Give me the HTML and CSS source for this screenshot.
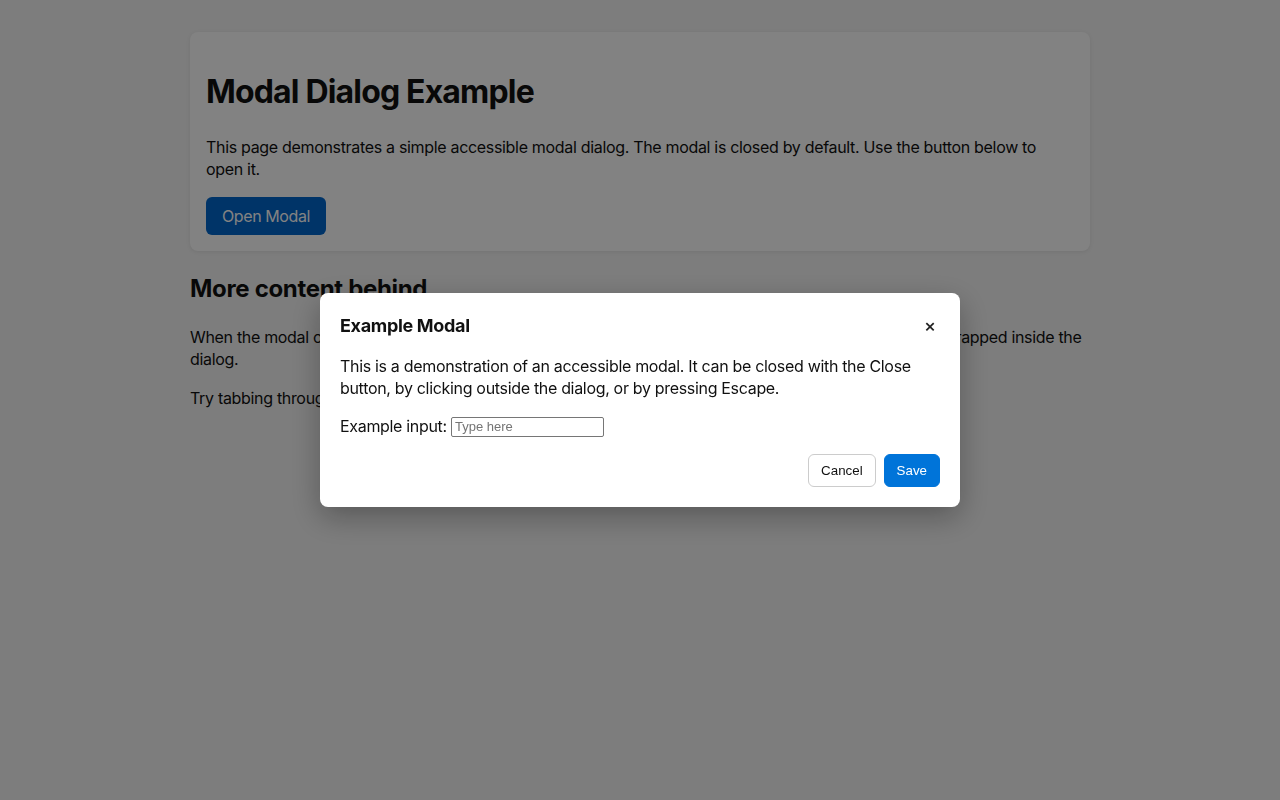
FILE: index.html
```html
<!DOCTYPE html>
<html lang="en">
<head>
  <meta charset="UTF-8">
  <meta name="viewport" content="width=device-width, initial-scale=1.0">
  <title>Modal Dialog Example</title>
  <link rel="stylesheet" href="styles.css">
</head>
<body>
  <div class="container">
    <div class="card">
      <h1>Modal Dialog Example</h1>
      <p>This page demonstrates a simple accessible modal dialog. The modal is closed by default. Use the button below to open it.</p>
      <button class="btn-open" id="open-modal">Open Modal</button>
    </div>
    <h2 class="section-title">More content behind</h2>
    <p>When the modal opens, the page content behind it is dimmed and cannot be reached. Keyboard focus is trapped inside the dialog.</p>
    <p>Try tabbing through the page with the modal open and closed.</p>
  </div>

  <div class="overlay" id="overlay">
    <div class="modal" role="dialog" aria-modal="true" aria-labelledby="modal-title">
      <div class="modal-header">
        <h2 id="modal-title">Example Modal</h2>
        <button class="close" aria-label="Close">&times;</button>
      </div>
      <p>This is a demonstration of an accessible modal. It can be closed with the Close button, by clicking outside the dialog, or by pressing Escape.</p>
      <label>Example input: <input type="text" placeholder="Type here"></label>
      <div class="modal-footer">
        <button class="btn-cancel">Cancel</button>
        <button class="btn-save">Save</button>
      </div>
    </div>
  </div>
</body>
</html>
```

FILE: styles.css
```css
body {
  margin: 0;
  font-family: Inter, "Noto Sans", sans-serif;
  line-height: 1.4;
  letter-spacing: -0.02em;
  color: #111;
  background-color: #f5f5f5;
}

.container {
  max-width: 900px;
  margin: 32px auto;
}

.card {
  background-color: #fff;
  border-radius: 8px;
  padding: 17px 16px 16px;
  box-shadow: 0 1px 4px rgba(0, 0, 0, 0.08);
}

h1 {
  font-size: 32px;
  letter-spacing: -0.026em;
  margin: 21px 0;
}

h2 {
  font-size: 24px;
  margin: 20px 0;
}

.section-title {
  margin-top: 21.5px;
}

p {
  margin: 16px 0;
}

.btn-open {
  font-family: inherit;
  font-size: 16px;
  line-height: 1.4;
  letter-spacing: -0.025em;
  padding: 8px 16px;
  border: none;
  border-radius: 6px;
  background-color: #0066cc;
  color: #fff;
}

.overlay {
  position: fixed;
  inset: 0;
  background-color: rgba(0, 0, 0, 0.49);
  display: flex;
  align-items: center;
  justify-content: center;
}

.modal {
  width: 640px;
  box-sizing: border-box;
  padding: 20px;
  background-color: #fff;
  border-radius: 8px;
  box-shadow: 0 10px 30px rgba(0, 0, 0, 0.3);
}

.modal-header {
  display: flex;
  align-items: center;
  justify-content: space-between;
}

.modal-header h2 {
  font-size: 18px;
  margin: 0;
}

.close {
  background: none;
  border: none;
  font-family: inherit;
  font-size: 18px;
  line-height: 1;
  padding: 2px 4px;
  color: #222;
  font-weight: 500;
}

.modal p {
  margin: 16px 0;
}

.modal input {
  width: 153px;
  height: 20px;
  box-sizing: border-box;
  border: 1px solid #767676;
  border-radius: 2px;
  padding: 1px 3px;
  font-family: "Liberation Sans", Arial, sans-serif;
  font-size: 13px;
  letter-spacing: 0;
  vertical-align: 1px;
}

.modal input::placeholder {
  color: #757575;
}

.modal-footer {
  display: flex;
  justify-content: flex-end;
  gap: 8px;
  margin-top: 16px;
}

.modal-footer button {
  font-family: "Liberation Sans", Arial, sans-serif;
  font-size: 13.33px;
  letter-spacing: 0;
  padding: 8px 12px;
  border-radius: 6px;
}

.btn-cancel {
  background-color: #fff;
  border: 1px solid #ccc;
  color: #111;
}

.btn-save {
  background-color: #0074d9;
  border: 1px solid #0074d9;
  color: #fff;
}
```
